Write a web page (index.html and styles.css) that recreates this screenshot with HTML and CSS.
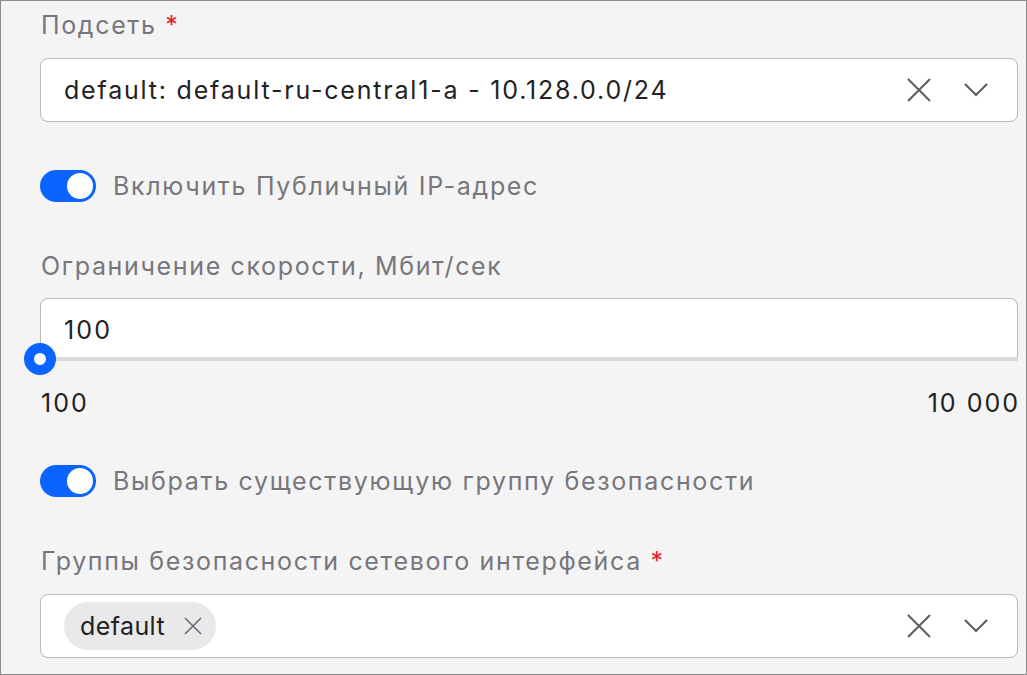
FILE: index.html
```html
<!DOCTYPE html>
<html>
<head>
    <title>Сетевой интерфейс</title>
    <meta name="viewport" content="width=device-width, initial-scale=1">
    <link rel="stylesheet" href="styles.css">
</head>
<body>
  <div class="frame">
    <div class="label">Подсеть <span class="req">*</span></div>
    <div class="select">
      <span class="value">default: default-ru-central1-a - 10.128.0.0/24</span>
      <span class="icons">
        <svg class="ic" width="26" height="26" viewBox="0 0 26 26"><path d="M2 2L24 24M24 2L2 24" /></svg>
        <svg class="ic" width="26" height="26" viewBox="0 0 26 26"><path d="M2 7L13 18L24 7" /></svg>
      </span>
    </div>

    <label class="toggle-row first">
      <span class="toggle"><span class="knob"></span></span>
      <span class="toggle-text">Включить Публичный IP-адрес</span>
    </label>

    <div class="label">Ограничение скорости, Мбит/сек</div>
    <div class="slider-box">
      <div class="slider-input"><span class="value">100</span></div>
      <div class="track"><span class="thumb"></span></div>
    </div>
    <div class="range">
      <span>100</span>
      <span>10 000</span>
    </div>

    <label class="toggle-row second">
      <span class="toggle"><span class="knob"></span></span>
      <span class="toggle-text">Выбрать существующую группу безопасности</span>
    </label>

    <div class="label">Группы безопасности сетевого интерфейса <span class="req">*</span></div>
    <div class="select multi">
      <span class="chip">default
        <svg class="ic small" width="18" height="18" viewBox="0 0 18 18"><path d="M1 1L17 17M17 1L1 17" /></svg>
      </span>
      <span class="icons">
        <svg class="ic" width="26" height="26" viewBox="0 0 26 26"><path d="M2 2L24 24M24 2L2 24" /></svg>
        <svg class="ic" width="26" height="26" viewBox="0 0 26 26"><path d="M2 7L13 18L24 7" /></svg>
      </span>
    </div>
  </div>
</body>
</html>
```

FILE: styles.css
```css
* {
  box-sizing: border-box;
}

body {
  margin: 0;
  font-family: Inter, "Noto Sans", sans-serif;
  color: #222;
}

.frame {
  width: 1027px;
  height: 675px;
  background: #f4f4f4;
  border: 1px solid #8c8c8c;
  padding: 8px 8px 0 39px;
  overflow: hidden;
}

.label {
  font-size: 25px;
  line-height: 32px;
  letter-spacing: 1.65px;
  color: #76767c;
  padding-left: 1px;
}
.req {
  color: #e5202a;
}

.select {
  margin-top: 17px;
  height: 64px;
  background: #fff;
  border: 1px solid #b9b9bc;
  border-radius: 8px;
  display: flex;
  align-items: center;
  padding: 0 28px 0 23px;
}
.select .value {
  flex: 1;
  font-size: 25px;
  letter-spacing: 1.8px;
}
.icons {
  display: flex;
  align-items: center;
  gap: 31px;
  margin-left: auto;
}
.ic path {
  fill: none;
  stroke: #5c5c62;
  stroke-width: 2;
}
.ic.small path {
  stroke-width: 1.6;
  stroke: #6a6a70;
}

.toggle-row {
  display: flex;
  align-items: center;
  gap: 17px;
}
.toggle-row.first {
  margin: 48px 0 48px;
}
.toggle-row.second {
  margin: 46px 0 48px;
}
.toggle {
  width: 56px;
  height: 32px;
  border-radius: 16px;
  background: #0b64ff;
  display: flex;
  align-items: center;
  justify-content: flex-end;
  padding: 0 3px;
}
.knob {
  width: 26px;
  height: 26px;
  border-radius: 50%;
  background: #fff;
}
.toggle-text {
  font-size: 25px;
  line-height: 32px;
  letter-spacing: 1.67px;
  color: #76767c;
}

.slider-box {
  margin-top: 16px;
}
.slider-input {
  height: 59px;
  background: #fff;
  border: 1px solid #b9b9bc;
  border-bottom: none;
  border-radius: 8px 8px 0 0;
  display: flex;
  align-items: center;
  padding: 4px 0 0 23px;
}
.slider-input .value {
  font-size: 25px;
  letter-spacing: 2.2px;
}
.track {
  position: relative;
  height: 4px;
  background: #d9d9dc;
}
.thumb {
  position: absolute;
  left: -16px;
  top: -14px;
  width: 32px;
  height: 32px;
  border-radius: 50%;
  background: #fff;
  border: 10px solid #0b64ff;
}

.range {
  display: flex;
  justify-content: space-between;
  font-size: 25px;
  line-height: 32px;
  letter-spacing: 2px;
  margin-top: 26px;
  padding-left: 1px;
}
.range span:last-child {
  margin-right: -2px;
}

.select.multi {
  margin-top: 17px;
  padding-left: 23px;
  height: 64px;
}
.chip {
  display: flex;
  align-items: center;
  gap: 19px;
  height: 48px;
  padding: 0 14px 0 16px;
  border-radius: 24px;
  background: #e9e9eb;
  font-size: 25px;
  letter-spacing: 0.4px;
}
```
